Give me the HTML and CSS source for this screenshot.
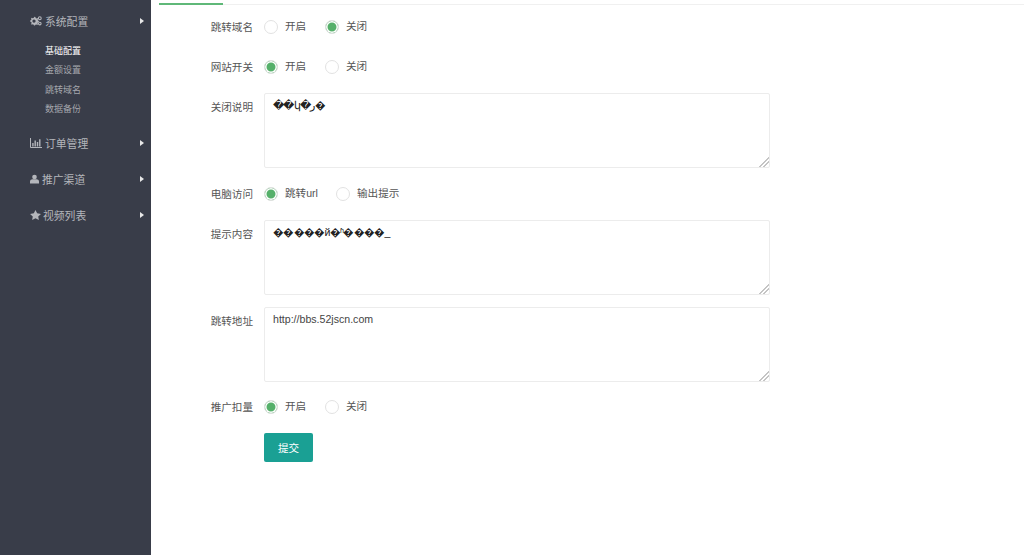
FILE: index.html
```html
<!DOCTYPE html>
<html lang="zh-CN">

<head>
    <meta charset="UTF-8">
    <title>基础配置</title>
    <link rel="stylesheet" href="styles.css">
</head>

<body>
    <div class="side">
        <div class="nav-item nav-first">
            <svg class="nav-icon" viewBox="0 0 12 10" width="12" height="10">
                <path fill="#b4b6bb" fill-rule="evenodd" d="M4 1.2l1 .1.3 1 .9.5.9-.4.7.8-.5.8.3 1 .9.4v1l-.9.3-.4 1 .4.9-.8.7-.8-.5-1 .3-.4.9h-1l-.3-.9-1-.4-.9.4-.7-.8.5-.8-.3-1L-.3 6V5l.9-.3.4-1-.4-.9.8-.7.8.5 1-.3zM3.6 3.900a1.600 1.600 0 1 0 .01 0z" transform="translate(.4 -.4)"/>
                <circle cx="9.800" cy="2.200" r="1.400" fill="none" stroke="#b4b6bb" stroke-width="1.100"/>
                <circle cx="9.800" cy="7.600" r="1.300" fill="none" stroke="#b4b6bb" stroke-width="1.100"/>
            </svg>
            <span>系统配置</span>
            <i class="arrow"></i>
        </div>
        <div class="sub-list">
            <a class="sub-item sub-active">基础配置</a>
            <a class="sub-item">金额设置</a>
            <a class="sub-item">跳转域名</a>
            <a class="sub-item">数据备份</a>
        </div>
        <div class="nav-item nav-orders">
            <svg class="nav-icon" viewBox="0 0 12 10" width="12" height="10">
                <path fill="none" stroke="#b4b6bb" d="M.5 0v9.500H12"/>
                <path fill="#b4b6bb" d="M2.200 5h1.400v3.600H2.200zM4.500 2.500h1.400v6.100H4.500zM6.800 4h1.400v4.600H6.800zM9.100 1.200h1.400v7.400H9.100z"/>
            </svg>
            <span>订单管理</span>
            <i class="arrow"></i>
        </div>
        <div class="nav-item">
            <svg class="nav-icon nav-icon-small" viewBox="0 0 10 10" width="9" height="10">
                <circle cx="5" cy="2.800" r="2.600" fill="#b4b6bb"/>
                <path fill="#b4b6bb" d="M0 10V7.600C0 6 1.500 5.200 2.800 5.200h4.400C8.500 5.200 10 6 10 7.600V10z"/>
            </svg>
            <span>推广渠道</span>
            <i class="arrow"></i>
        </div>
        <div class="nav-item">
            <svg class="nav-icon nav-icon-star" viewBox="0 0 12 11" width="11" height="10">
                <path fill="#b4b6bb" d="M6 0l1.800 3.700 4.200.6-3 2.900.7 3.800L6 9.200 2.300 11 3 7.200 0 4.300l4.200-.6z"/>
            </svg>
            <span>视频列表</span>
            <i class="arrow"></i>
        </div>
    </div>

    <div class="main">
        <div class="tab-bar"><div class="tab-on"></div></div>

        <form class="config-form">
            <div class="form-row row-1">
                <label class="row-label">跳转域名</label>
                <div class="row-input">
                    <span class="radio"><i class="dot"></i><span class="radio-text">开启</span></span>
                    <span class="radio radio-on"><i class="dot"></i><span class="radio-text">关闭</span></span>
                </div>
            </div>
            <div class="form-row row-2">
                <label class="row-label">网站开关</label>
                <div class="row-input">
                    <span class="radio radio-on"><i class="dot"></i><span class="radio-text">开启</span></span>
                    <span class="radio"><i class="dot"></i><span class="radio-text">关闭</span></span>
                </div>
            </div>
            <div class="form-row row-area row-3">
                <label class="row-label">关闭说明</label>
                <textarea class="area area-bad">��կ�ر�</textarea>
            </div>
            <div class="form-row row-4">
                <label class="row-label">电脑访问</label>
                <div class="row-input">
                    <span class="radio radio-on radio-tight"><i class="dot"></i><span class="radio-text">跳转url</span></span>
                    <span class="radio radio-wide"><i class="dot"></i><span class="radio-text">输出提示</span></span>
                </div>
            </div>
            <div class="form-row row-area row-5">
                <label class="row-label">提示内容</label>
                <textarea class="area area-bad">�����й�ʱ����_</textarea>
            </div>
            <div class="form-row row-area row-6">
                <label class="row-label">跳转地址</label>
                <textarea class="area">http://bbs.52jscn.com</textarea>
            </div>
            <div class="form-row row-7">
                <label class="row-label">推广扣量</label>
                <div class="row-input">
                    <span class="radio radio-on"><i class="dot"></i><span class="radio-text">开启</span></span>
                    <span class="radio"><i class="dot"></i><span class="radio-text">关闭</span></span>
                </div>
            </div>
            <div class="form-row row-8">
                <label class="row-label"></label>
                <button type="button" class="btn">提交</button>
            </div>
        </form>
    </div>
</body>

</html>
```

FILE: styles.css
```css
* {
    box-sizing: border-box;
}

html,
body {
    height: 100%;
}

body {
    margin: 0;
    display: flex;
    overflow: hidden;
    background-color: #fff;
    color: #555;
    font-family: "Liberation Sans", "Noto Sans CJK SC", sans-serif;
    font-size: 10.6px;
}

.side {
    width: 151px;
    flex-shrink: 0;
    background-color: #393d49;
    color: #b4b6bb;
}

.main {
    flex: 1;
}

.nav-item {
    position: relative;
    display: flex;
    align-items: center;
    height: 36px;
    padding-left: 30px;
    font-size: 10.8px;
}

.nav-first {
    margin-top: 3px;
}

.nav-orders {
    margin-top: 5px;
}

.nav-icon {
    margin-right: 3px;
}

.nav-icon-small {
    margin-right: 3px;
}

.nav-icon-star {
    margin-right: 2px;
}

.arrow {
    position: absolute;
    left: 140px;
    top: 15px;
    border-left: 4px solid #e8e8e8;
    border-top: 3px solid transparent;
    border-bottom: 3px solid transparent;
}

.sub-list {
    padding-top: 3px;
}

.sub-item {
    display: block;
    height: 19.4px;
    line-height: 19.4px;
    padding-left: 45px;
    font-size: 9px;
    color: #a5a7ad;
}

.sub-active {
    color: #fff;
}

.tab-bar {
    height: 5px;
    margin-left: 8px;
    padding-top: 3px;
    border-bottom: 1px solid #f0f0f0;
}

.tab-on {
    width: 64px;
    height: 2px;
    background-color: #5fb878;
}

.form-row {
    display: flex;
}

.row-label {
    width: 94px;
    margin-left: 8px;
    text-align: right;
    color: #555;
    line-height: 38px;
    flex-shrink: 0;
}

.row-area .row-label {
    line-height: 28px;
}

.row-input {
    display: flex;
    align-items: center;
    height: 38px;
    margin-left: 11px;
}

.radio {
    display: flex;
    align-items: center;
    width: 61px;
}

.radio-tight {
    width: 72px;
}

.radio-wide {
    width: 80px;
}

.radio-text {
    margin-bottom: 3px;
}

.dot {
    width: 14px;
    height: 14px;
    margin-right: 7px;
    border: 1px solid #e2e2e2;
    border-radius: 50%;
    background-color: #fff;
    flex-shrink: 0;
}

.radio-on .dot {
    background-color: #55b06a;
    box-shadow: inset 0 0 0 1.5px #fff;
}

.area {
    display: block;
    width: 506px;
    height: 75px;
    margin: 0 0 0 11px;
    padding: 4px 8px;
    border: 1px solid #ececec;
    border-radius: 2px;
    outline: none;
    color: #444;
    font-family: "Liberation Sans", "Noto Sans CJK SC", sans-serif;
    font-size: 10.6px;
    line-height: 15px;
}

.area::-webkit-resizer {
    background: linear-gradient(135deg, transparent 66%, #c4c4c4 66%, #c4c4c4 72%, transparent 72%, transparent 78%, #c4c4c4 78%, #c4c4c4 84%, transparent 84%);
}

.area-bad {
    color: #222;
    letter-spacing: -0.7px;
}

.row-1 {
    margin-top: 3px;
}

.row-2 {
    margin-top: 2px;
}

.row-3,
.row-4,
.row-5 {
    margin-top: 7px;
}

.row-6 {
    margin-top: 12px;
}

.row-7 {
    margin-top: 6px;
}

.row-8 {
    margin-top: 7px;
}

.btn {
    width: 49px;
    height: 29px;
    margin-left: 11px;
    border: none;
    border-radius: 2px;
    background-color: #1aa094;
    color: #fff;
    font-family: "Liberation Sans", "Noto Sans CJK SC", sans-serif;
    font-size: 10.6px;
}
```
